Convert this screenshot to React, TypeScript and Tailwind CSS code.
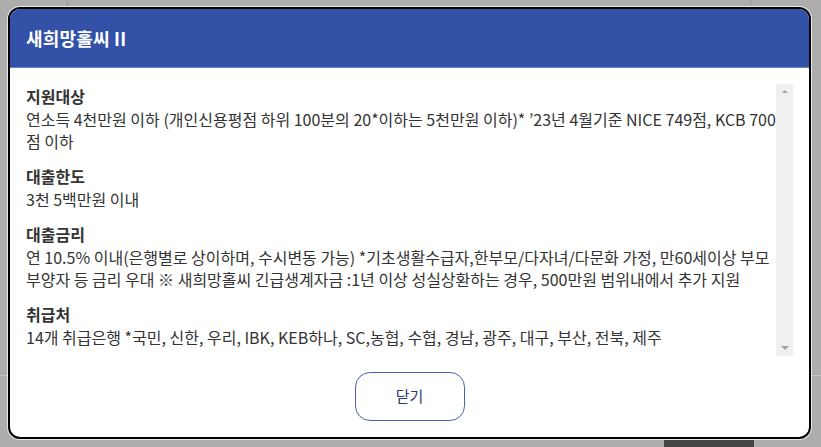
import React from "react";

const sections: { title: string; body: string }[] = [
  {
    title: "지원대상",
    body: "연소득 4천만원 이하 (개인신용평점 하위 100분의 20*이하는 5천만원 이하)* ’23년 4월기준 NICE 749점, KCB 700점 이하",
  },
  { title: "대출한도", body: "3천 5백만원 이내" },
  {
    title: "대출금리",
    body: "연 10.5% 이내(은행별로 상이하며, 수시변동 가능) *기초생활수급자,한부모/다자녀/다문화 가정, 만60세이상 부모 부양자 등 금리 우대 ※ 새희망홀씨 긴급생계자금 :1년 이상 성실상환하는 경우, 500만원 범위내에서 추가 지원",
  },
  {
    title: "취급처",
    body: "14개 취급은행 *국민, 신한, 우리, IBK, KEB하나, SC,농협, 수협, 경남, 광주, 대구, 부산, 전북, 제주",
  },
];

export default function App() {
  return (
    <div className="relative w-[821px] h-[447px] overflow-hidden bg-[#adadad] font-['Noto_Sans_CJK_KR','Noto_Sans',sans-serif]">
      {/* backdrop page remnants */}
      <div className="absolute left-[67px] top-0 w-px h-[7px] bg-[#9a9a9a]" />
      <div className="absolute left-[750px] top-0 w-px h-[7px] bg-[#9a9a9a]" />
      <div className="absolute left-0 top-[375px] w-[8px] h-px bg-[#c4c4c4]" />
      <div className="absolute left-[811px] top-[375px] w-[10px] h-px bg-[#c4c4c4]" />
      <div className="absolute left-[664px] top-[440px] w-[90px] h-[7px] bg-[#444444]" />

      {/* modal */}
      <div className="absolute left-[8px] top-[7px] w-[803px] h-[432px] rounded-[12px] border-2 border-black bg-white shadow-[0_0_0_1px_#e8e8e8] overflow-hidden flex flex-col">
        <div className="h-[59px] shrink-0 bg-[#3351a7] border-b border-[#6a80c6] flex items-center pl-[16px]">
          <h2 className="text-white text-[18px] font-bold tracking-[0.2px]">새희망홀씨 II</h2>
        </div>
        <div className="flex-1 flex flex-col px-[16px] pt-[16px] pb-[16px]">
          <div className="flex h-[272px]">
            <div className="flex-1 pt-[1px] text-[#333333] text-[16px] leading-[22px]">
              {sections.map((s, i) => (
                <div key={s.title} className={i === 0 ? "" : "mt-[13px]"}>
                  <div className="font-bold leading-[23px]">{s.title}</div>
                  <p>{s.body}</p>
                </div>
              ))}
            </div>
            <div className="w-[17px] bg-[#f0f0f0] flex flex-col items-center justify-between py-[6px]">
              <div className="w-0 h-0 border-l-[3px] border-r-[3px] border-b-[3px] border-l-transparent border-r-transparent border-b-[#a3a3a3]" />
              <div className="w-0 h-0 border-l-[4px] border-r-[4px] border-t-[4px] border-l-transparent border-r-transparent border-t-[#a3a3a3]" />
            </div>
          </div>
          <button className="mt-[16px] mx-auto w-[110px] h-[49px] rounded-[15px] border border-[#4a62b5] bg-white text-[15px] text-[#2b3a6b]">
            닫기
          </button>
        </div>
      </div>
    </div>
  );
}
